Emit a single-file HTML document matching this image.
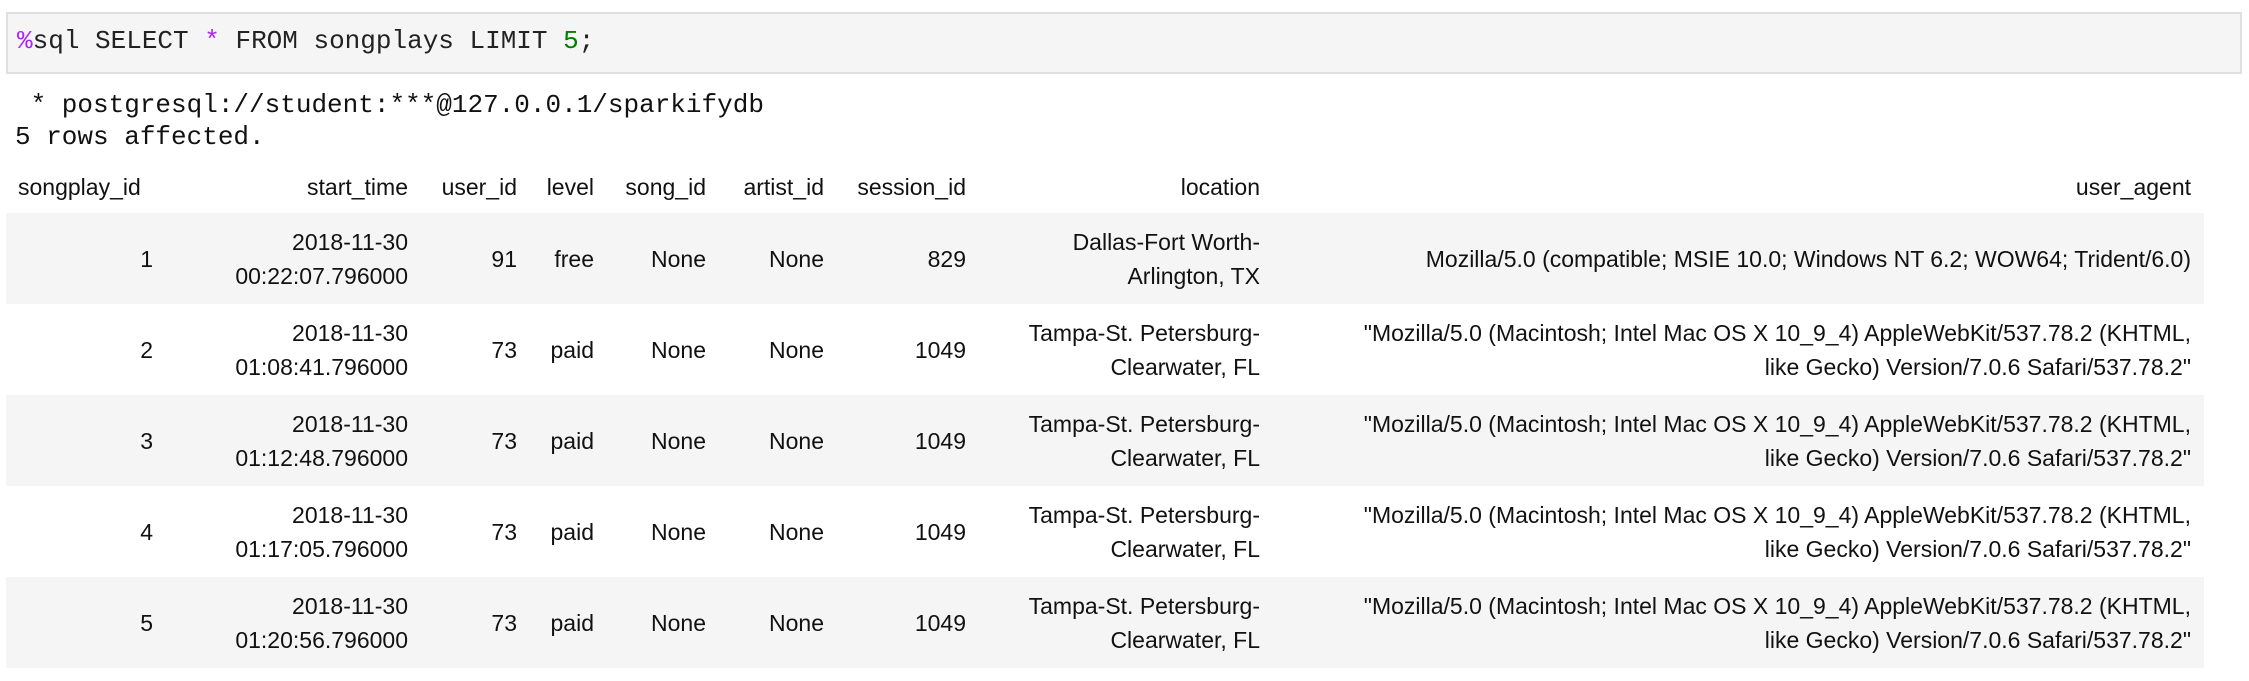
<!DOCTYPE html>
<html><head><meta charset="utf-8"><style>
html,body{margin:0;padding:0;background:#fff;width:2249px;height:681px;overflow:hidden}
.inp{position:absolute;left:6px;top:12px;width:2236px;height:62px;background:#f5f5f5;border:2px solid #e0e0e0;box-sizing:border-box}
.code{position:absolute;left:17px;top:23px;font:26px/36px "Liberation Mono",monospace;color:#222;white-space:pre}
.m{color:#aa22ff}.gr{color:#008000}
.out{position:absolute;left:15px;top:89px;font:26px/32px "Liberation Mono",monospace;color:#111;white-space:pre}
table{position:absolute;left:6px;top:160px;border-collapse:collapse;table-layout:fixed;width:2198px;font:23px/34px "Liberation Sans",sans-serif;color:#111}
td,th{padding:0 13px 0 0;text-align:right;white-space:nowrap;font-weight:normal;vertical-align:middle}
th{height:53px}
td{height:91px}
tr.alt td{background:#f5f5f5}
th:first-child{text-align:left;padding-left:12px}
</style></head><body>
<div class="inp"></div>
<div class="code"><span class="m">%</span>sql SELECT <span class="m">*</span> FROM songplays LIMIT <span class="gr">5</span>;</div>
<div class="out"> * postgresql://student:***@127.0.0.1/sparkifydb
5 rows affected.</div>
<table>
<colgroup><col style="width:160px"><col style="width:255px"><col style="width:109px"><col style="width:77px"><col style="width:112px"><col style="width:118px"><col style="width:142px"><col style="width:294px"><col style="width:931px"></colgroup>
<tr><th>songplay_id</th><th>start_time</th><th>user_id</th><th>level</th><th>song_id</th><th>artist_id</th><th>session_id</th><th>location</th><th>user_agent</th></tr>
<tr class="alt"><td>1</td><td>2018-11-30<br>00:22:07.796000</td><td>91</td><td>free</td><td>None</td><td>None</td><td>829</td><td>Dallas-Fort Worth-<br>Arlington, TX</td><td>Mozilla/5.0 (compatible; MSIE 10.0; Windows NT 6.2; WOW64; Trident/6.0)</td></tr>
<tr><td>2</td><td>2018-11-30<br>01:08:41.796000</td><td>73</td><td>paid</td><td>None</td><td>None</td><td>1049</td><td>Tampa-St. Petersburg-<br>Clearwater, FL</td><td>"Mozilla/5.0 (Macintosh; Intel Mac OS X 10_9_4) AppleWebKit/537.78.2 (KHTML,<br>like Gecko) Version/7.0.6 Safari/537.78.2"</td></tr>
<tr class="alt"><td>3</td><td>2018-11-30<br>01:12:48.796000</td><td>73</td><td>paid</td><td>None</td><td>None</td><td>1049</td><td>Tampa-St. Petersburg-<br>Clearwater, FL</td><td>"Mozilla/5.0 (Macintosh; Intel Mac OS X 10_9_4) AppleWebKit/537.78.2 (KHTML,<br>like Gecko) Version/7.0.6 Safari/537.78.2"</td></tr>
<tr><td>4</td><td>2018-11-30<br>01:17:05.796000</td><td>73</td><td>paid</td><td>None</td><td>None</td><td>1049</td><td>Tampa-St. Petersburg-<br>Clearwater, FL</td><td>"Mozilla/5.0 (Macintosh; Intel Mac OS X 10_9_4) AppleWebKit/537.78.2 (KHTML,<br>like Gecko) Version/7.0.6 Safari/537.78.2"</td></tr>
<tr class="alt"><td>5</td><td>2018-11-30<br>01:20:56.796000</td><td>73</td><td>paid</td><td>None</td><td>None</td><td>1049</td><td>Tampa-St. Petersburg-<br>Clearwater, FL</td><td>"Mozilla/5.0 (Macintosh; Intel Mac OS X 10_9_4) AppleWebKit/537.78.2 (KHTML,<br>like Gecko) Version/7.0.6 Safari/537.78.2"</td></tr>
</table>
</body></html>
